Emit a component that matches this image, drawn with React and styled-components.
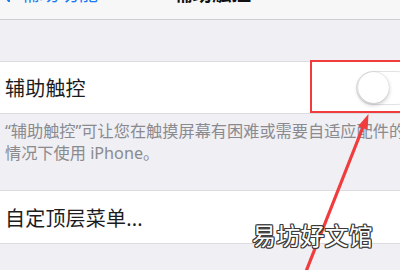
import React from 'react';
import styled, { createGlobalStyle } from 'styled-components';

const GlobalStyle = createGlobalStyle`
  html, body {
    margin: 0;
    padding: 0;
    overflow: hidden;
    background: #efeff4;
  }
  body {
    font-family: "Noto Sans", "Noto Sans CJK SC", sans-serif;
  }
`;

const Screen = styled.div`
  position: relative;
  width: 400px;
  height: 270px;
  overflow: hidden;
  background: #efeff4;
`;

const NavBar = styled.div`
  height: 19px;
  background: #f7f7f8;
  border-bottom: 1px solid #cfcfd3;
  overflow: hidden;
  display: flex;
  align-items: flex-start;
`;
const NavInner = styled.div`
  display: flex;
  align-items: center;
  margin-top: -16px;
  height: 20px;
  width: 100%;
`;
const BackLink = styled.div`
  display: flex;
  align-items: center;
  color: #1a7cf5;
  font-size: 19.5px;
  line-height: 20px;
  gap: 10px;
  padding-left: 2px;
`;
const NavTitle = styled.div`
  margin-left: 75px;
  font-size: 19.5px;
  line-height: 20px;
  font-weight: 600;
  color: #111;
`;

const Spacer = styled.div`
  height: ${(p) => p.h}px;
`;

const Group = styled.div`
  background: #fff;
  border-top: 1px solid #dcdce0;
  border-bottom: 1px solid #dcdce0;
`;
const Row = styled.div`
  height: ${(p) => p.h}px;
  display: flex;
  align-items: center;
  justify-content: space-between;
  padding-left: 5px;
`;
const Label = styled.div`
  font-size: 20px;
  color: #1c1c1e;
  letter-spacing: 0.2px;
`;

const Switch = styled.div`
  width: 58px;
  height: 34px;
  margin-right: -14px;
  border-radius: 17px;
  border: 1.5px solid #e3e3e6;
  box-sizing: border-box;
  display: flex;
  align-items: center;
  padding-left: 1px;
`;
const Knob = styled.div`
  width: 31px;
  height: 31px;
  border-radius: 50%;
  background: #fff;
  box-shadow: 0 2px 4px rgba(0, 0, 0, 0.22), 0 0 1px rgba(0, 0, 0, 0.25);
`;

const Footer = styled.div`
  padding: 6px 0 0 5px;
  font-size: 16.2px;
  line-height: 22px;
  color: #8a8a8f;
  white-space: nowrap;
  height: 76px;
  box-sizing: border-box;
`;

const Highlight = styled.div`
  position: absolute;
  left: 310px;
  top: 60px;
  width: 100px;
  height: 53px;
  border: 2px solid #f03c3c;
  box-sizing: border-box;
`;

const Overlay = styled.svg`
  position: absolute;
  left: 0;
  top: 0;
  pointer-events: none;
`;

const Watermark = styled.div`
  position: absolute;
  left: 252px;
  top: 224px;
  font-size: 24px;
  line-height: 24px;
  color: #fff;
  letter-spacing: 0.2px;
  text-shadow: 1px 0 0 #3a3a3a, -1px 0 0 #3a3a3a, 0 1px 0 #3a3a3a, 0 -1px 0 #3a3a3a,
    1px 1px 0 #3a3a3a, -1px -1px 0 #3a3a3a, 1px -1px 0 #3a3a3a, -1px 1px 0 #3a3a3a;
`;

export default function App() {
  return (
    <Screen>
      <GlobalStyle />
      <NavBar>
        <NavInner>
          <BackLink>
            <svg width="8" height="16" viewBox="0 0 8 16">
              <path d="M7 1 L1.5 8 L7 15" fill="none" stroke="#1a7cf5" strokeWidth="2.4" strokeLinecap="round" />
            </svg>
            <span>辅助功能</span>
          </BackLink>
          <NavTitle>辅助触控</NavTitle>
        </NavInner>
      </NavBar>
      <Spacer h={41} />
      <Group>
        <Row h={51}>
          <Label>辅助触控</Label>
          <Switch>
            <Knob />
          </Switch>
        </Row>
      </Group>
      <Footer>
        “辅助触控”可让您在触摸屏幕有困难或需要自适应配件的
        <br />
        情况下使用 iPhone。
      </Footer>
      <Group>
        <Row h={52}>
          <Label>自定顶层菜单...</Label>
        </Row>
      </Group>

      <Highlight />
      <Overlay width="400" height="270" viewBox="0 0 400 270">
        <line x1="305" y1="274" x2="363" y2="127" stroke="#f03c3c" strokeWidth="3.2" />
        <polygon points="368.5,114 367.6,130 358,126.2" fill="#f03c3c" />
      </Overlay>
      <Watermark>易坊好文馆</Watermark>
    </Screen>
  );
}
